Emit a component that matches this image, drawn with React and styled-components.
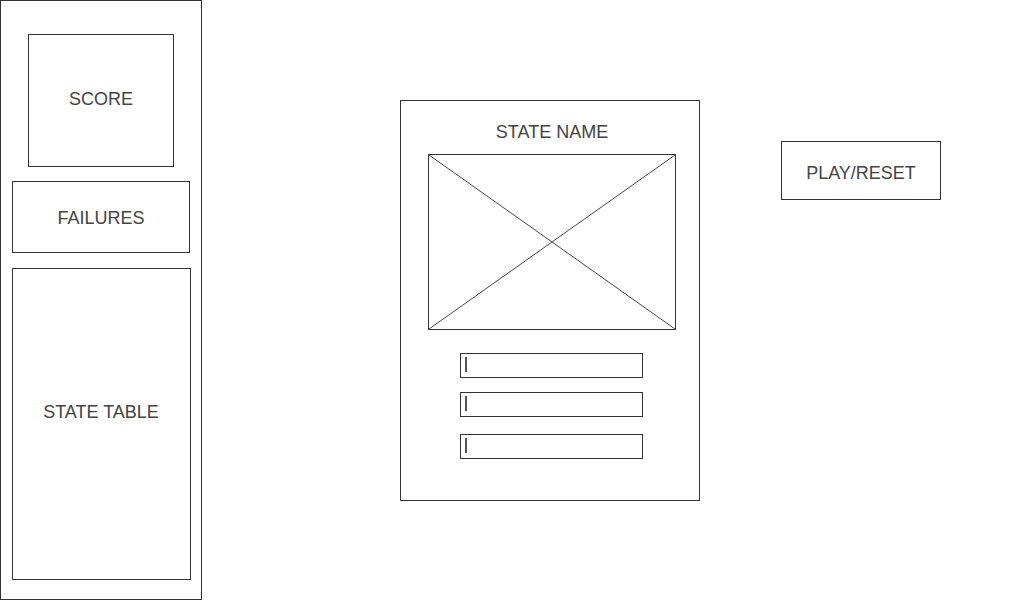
import React from "react";
import styled, { createGlobalStyle } from "styled-components";

const GlobalStyle = createGlobalStyle`
  html, body {
    margin: 0;
    padding: 0;
    background: #fff;
  }
  body {
    font-family: "Liberation Sans", Arial, sans-serif;
    color: #444;
  }
  * {
    box-sizing: border-box;
  }
`;

const Page = styled.div`
  display: flex;
  flex-direction: row;
  align-items: flex-start;
  width: 1024px;
  height: 600px;
  overflow: hidden;
`;

const Sidebar = styled.div`
  display: flex;
  flex-direction: column;
  align-items: center;
  width: 202px;
  height: 600px;
  padding-top: 33px;
  border: 1px solid #333;
  flex-shrink: 0;
`;

const Panel = styled.div`
  display: flex;
  align-items: center;
  justify-content: center;
  width: ${(p) => p.w}px;
  height: ${(p) => p.h}px;
  margin-top: ${(p) => p.mt || 0}px;
  padding-bottom: ${(p) => p.pb || 0}px;
  padding-top: ${(p) => p.pt || 0}px;
  border: 1px solid #333;
  font-size: 18px;
  flex-shrink: 0;
`;

const Main = styled.div`
  display: flex;
  flex-direction: row;
  align-items: flex-start;
  padding-left: 198px;
  padding-top: 100px;
  gap: 81px;
`;

const Card = styled.div`
  display: flex;
  flex-direction: column;
  align-items: center;
  width: 300px;
  height: 401px;
  padding: 21px 22px 0 26px;
  border: 1px solid #333;
`;

const Title = styled.div`
  height: 20px;
  line-height: 20px;
  font-size: 18px;
  white-space: nowrap;
`;

const ImageBox = styled.div`
  width: 248px;
  height: 176px;
  margin-top: 12px;
  border: 1px solid #333;
  flex-shrink: 0;

  svg {
    display: block;
    width: 100%;
    height: 100%;
  }
`;

const Field = styled.div`
  display: flex;
  align-items: flex-start;
  width: 183px;
  height: 25px;
  margin-top: ${(p) => p.mt}px;
  margin-right: 1px;
  padding: 3px 0 0 4px;
  border: 1px solid #333;
  flex-shrink: 0;
`;

const Caret = styled.span`
  display: block;
  width: 2px;
  height: 15px;
  background: #555;
`;

const PlayButton = styled(Panel)`
  margin-top: 41px;
`;

function ImagePlaceholder() {
  return (
    <ImageBox>
      <svg viewBox="0 0 246 174" preserveAspectRatio="none">
        <line x1="0" y1="0" x2="246" y2="174" stroke="#444" strokeWidth="1" />
        <line x1="246" y1="0" x2="0" y2="174" stroke="#444" strokeWidth="1" />
      </svg>
    </ImageBox>
  );
}

function App() {
  return (
    <>
      <GlobalStyle />
      <Page>
        <Sidebar>
          <Panel w={146} h={133} pb={3}>SCORE</Panel>
          <Panel w={178} h={72} mt={14} pt={2}>FAILURES</Panel>
          <Panel w={179} h={312} mt={15} pb={24}>STATE TABLE</Panel>
        </Sidebar>

        <Main>
          <Card>
            <Title>STATE NAME</Title>
            <ImagePlaceholder />
            <Field mt={23}><Caret /></Field>
            <Field mt={14}><Caret /></Field>
            <Field mt={17}><Caret /></Field>
          </Card>

          <PlayButton w={160} h={59} pt={5}>PLAY/RESET</PlayButton>
        </Main>
      </Page>
    </>
  );
}

export default App;
